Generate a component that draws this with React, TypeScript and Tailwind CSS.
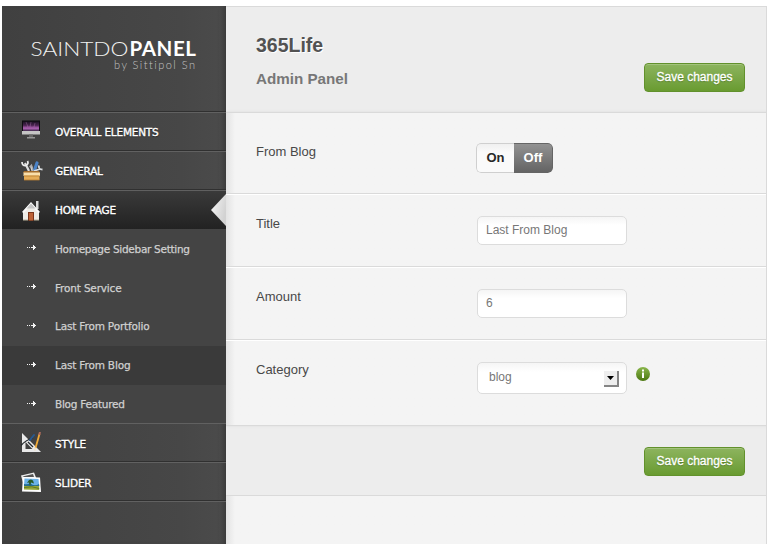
import type { ReactNode } from "react";

function MonitorIcon() {
  return (
    <svg className="-mt-[3px]" width="20" height="20" viewBox="0 0 20 20">
      <defs>
        <linearGradient id="screen" x1="0" y1="0" x2="0" y2="1">
          <stop offset="0" stopColor="#1a1222" />
          <stop offset="0.4" stopColor="#4a2350" />
          <stop offset="0.7" stopColor="#b264b8" />
          <stop offset="1" stopColor="#3c2748" />
        </linearGradient>
      </defs>
      <rect x="1" y="0.500" width="18" height="11.500" fill="#0d0c10" />
      <rect x="2" y="1.500" width="16" height="9.500" fill="url(#screen)" />
      <path d="M5 2l2 5M10 2l-1 5M14 3l-1 4" stroke="#e09be0" strokeWidth="0.7" opacity="0.4" />
      <rect x="1" y="11" width="18" height="3.500" fill="#c4c4c4" />
      <rect x="8" y="14.500" width="4" height="3" fill="#666" />
      <rect x="6" y="17" width="8" height="1.500" fill="#959595" />
    </svg>
  );
}

function ToolboxIcon() {
  return (
    <svg width="22" height="21" viewBox="0 0 22 21">
      <path d="M4 3l4 8M10 6l2 6" stroke="#dedede" strokeWidth="2.2" />
      <path d="M1 2q0 4 4 3.500Q8 4 6.500 1" fill="none" stroke="#eee" strokeWidth="1.700" />
      <path d="M16 3l-2.500 7" stroke="#4b83c8" strokeWidth="3.200" strokeLinecap="round" />
      <path d="M13 11l6-2M18 5.500q-1 4 3.500 4" fill="none" stroke="#d9dde0" strokeWidth="1.800" />
      <path d="M8.500 7l2-2 1.500 6" fill="none" stroke="#aaa" strokeWidth="1.300" />
      <path d="M3 11h15l1 2H2z" fill="#a26b2a" />
      <rect x="2.500" y="12.500" width="16.500" height="3.500" fill="#f9dfab" />
      <rect x="3" y="15.500" width="15.500" height="4.500" fill="#e5ad58" />
      <path d="M3 16h15.500M3 20h15.500" stroke="#b97e30" strokeWidth="0.8" />
    </svg>
  );
}

function HomeIcon() {
  return (
    <svg width="20" height="21" viewBox="0 0 20 21">
      <rect x="15" y="1" width="2.500" height="8" fill="#ddd" />
      <path d="M2 11.500L10 3l8 8.500V20H2z" fill="#eeece7" />
      <path d="M10 2L19 12 17.500 13 10 5.500 2.500 13 1 12z" fill="#fafafa" />
      <path d="M10 3.500L5.500 8.500h9z" fill="#c4c4c4" />
      <rect x="7" y="12" width="6" height="8.500" fill="#7b351b" />
      <rect x="8" y="13" width="4" height="7.500" fill="#bd6237" />
      <path d="M2 20h5M13 20h5" stroke="#b7b19a" />
    </svg>
  );
}

function StyleIcon() {
  return (
    <svg width="20" height="21" viewBox="0 0 20 21">
      <path fillRule="evenodd" d="M1 1v19h19zM4.500 10l7 7h-7z" fill="#e9e9e9" />
      <path d="M0 13.500q4-5 12-7.500M7 10l5 5" fill="none" stroke="#23292d" strokeWidth="1.300" />
      <path d="M9 8l4-5" stroke="#285a91" strokeWidth="2" strokeLinecap="round" />
      <path d="M18.500 2L14.500 16" stroke="#f2ab38" strokeWidth="1.800" />
      <path d="M19 0l-.8 3" stroke="#b36d5e" strokeWidth="2" />
      <path d="M14.500 15.500l-.8 3" stroke="#eee0c6" strokeWidth="1.400" />
    </svg>
  );
}

function SliderIcon() {
  return (
    <svg className="-ml-px mt-[2px]" width="22" height="21" viewBox="0 0 22 21">
      <path d="M1 3.500L14 .5l2 5 3 10L5 18z" fill="#eee" />
      <path d="M2.500 4.500L13 2l1 3H4z" fill="#555" />
      <path d="M3 5l17 .5L21 20 2 19.500z" fill="#fff" />
      <path d="M4.500 6.500L18.500 7l.7 7H4z" fill="#6bb2e8" />
      <path d="M4 13h15.200v5L4 17.500z" fill="#96a638" />
      <path d="M4 12q4 1 6-1 4 4 9.100 1v2H4z" fill="#246c91" />
      <path d="M7 11l2-3 2-.5 2 1 1 3-3-1-1 4-1-4z" fill="#285b28" />
      <path d="M4 15.500q8-2 15.200 1" fill="none" stroke="#5f7a24" />
    </svg>
  );
}

function NavItem({ icon, label, active = false, drop = "pt-[2px]" }: { icon: ReactNode; label: string; active?: boolean; drop?: string }) {
  return (
    <div
      className={
        active
          ? "relative flex h-[39px] items-center border-t border-[#606060] bg-linear-to-b from-[#3a3a3a] to-[#222222]"
          : "flex h-[39px] items-center border-t border-b border-t-[#616161] border-b-[#303030]"
      }
    >
      <span className="flex w-[53px] items-center pl-[19px]">{icon}</span>
      <span className={`text-[10.5px] font-normal tracking-[-0.2px] whitespace-nowrap text-white [-webkit-text-stroke:0.35px_white] [text-shadow:0_1px_1px_#222] ${drop}`}>
        {label}
      </span>
      {active && (
        <svg className="absolute top-[3px] right-0" width="15" height="32" viewBox="0 0 15 32">
          <defs>
            <linearGradient id="pointer" x1="0" y1="0" x2="1" y2="0.5">
              <stop offset="0" stopColor="#f8f8f8" />
              <stop offset="1" stopColor="#d2d2d2" />
            </linearGradient>
          </defs>
          <path d="M15 0v32L0 16z" fill="url(#pointer)" />
        </svg>
      )}
    </div>
  );
}

function SubItem({ label, active = false, tracking = "tracking-[-0.17px]", drop = "pt-0" }: { label: string; active?: boolean; tracking?: string; drop?: string }) {
  return (
    <div className={active ? "flex h-[39px] items-center bg-[#3a3a3a]" : "flex h-[39px] items-center"}>
      <span className="w-[53px] pl-[25px]">
        <svg className="-mt-[3px]" width="9" height="5" viewBox="0 0 9 5" shapeRendering="crispEdges" fill="#f3f3f3">
          <path d="M0 2h1v1H0zM2 2h1v1H2zM4 2h5v1H4zM6 0h1v5H6zM7 1h1v3H7z" />
        </svg>
      </span>
      <span className={`text-[10.5px] whitespace-nowrap text-[#d0d0d0] [-webkit-text-stroke:0.25px_#d0d0d0] ${tracking} ${drop}`}>{label}</span>
    </div>
  );
}

function SaveButton() {
  return (
    <button className="h-[29px] w-[101px] rounded-[4px] border border-[#62912c] bg-linear-to-b from-[#8db45e] to-[#699b30] pb-px text-[12px] text-white shadow-[inset_0_1px_0_#a3c37c] [-webkit-text-stroke:0.3px_white] [text-shadow:0_1px_1px_#557b2b]">
      Save changes
    </button>
  );
}

const field =
  "flex w-[150px] items-center rounded-[5px] border border-[#dcdcdc] bg-white bg-linear-to-b from-[#f5f5f5] to-white to-30% text-[12px] text-[#777]";

function Row({ label, className, children }: { label: string; className: string; children: ReactNode }) {
  return (
    <div className={`flex items-start pl-[30px] ${className}`}>
      <div className="w-[221px] text-[13px] leading-[15px] text-[#484848]">{label}</div>
      {children}
    </div>
  );
}

export default function App() {
  return (
    <div className="h-[544px] w-[767px] overflow-hidden bg-white pt-[6px] pl-[2px] font-['Liberation_Sans',sans-serif]">
      <div className="flex h-[538px]">
        <aside className="w-[224px] shrink-0 bg-linear-to-r from-[#404040] via-[#474747] via-80% to-[#4b4b4b] font-['DejaVu_Sans',sans-serif] shadow-[inset_-6px_0_6px_-5px_#333]">
          <div className="h-[106px] border-b border-[#303030]">
            <svg width="223" height="104" viewBox="0 0 223 104">
              <g fontFamily="Lato, sans-serif" className="[font-variant-ligatures:none]">
                <text x="28.500" y="49.500" fontSize="20.500" fontWeight="300" fill="#f2f2f2" textLength="98" lengthAdjust="spacingAndGlyphs">SAINTDO</text>
                <text x="127.500" y="49.500" fontSize="20.500" fontWeight="700" fill="#fff" textLength="66.500" lengthAdjust="spacing">PANEL</text>
                <text x="112" y="63.200" fontSize="11" fontWeight="300" fill="#c4c4c4" textLength="81" lengthAdjust="spacing">by Sittipol Sn</text>
              </g>
            </svg>
          </div>
          <NavItem icon={<MonitorIcon />} label="OVERALL ELEMENTS" />
          <NavItem icon={<ToolboxIcon />} label="GENERAL" />
          <NavItem icon={<HomeIcon />} label="HOME PAGE" active />
          <div className="h-[194px] overflow-hidden bg-[#444444]">
            <SubItem label="Homepage Sidebar Setting" tracking="tracking-[-0.29px]" drop="pt-[2px]" />
            <SubItem label="Front Service" drop="pt-[2px]" />
            <SubItem label="Last From Portfolio" />
            <SubItem label="Last From Blog" active />
            <SubItem label="Blog Featured" tracking="tracking-[-0.25px]" />
          </div>
          <NavItem icon={<StyleIcon />} label="STYLE" drop="pt-1" />
          <NavItem icon={<SliderIcon />} label="SLIDER" drop="pt-1" />
          <div className="h-px bg-[#616161]" />
        </aside>

        <main className="w-[541px] shrink-0 border-t border-r border-[#dadada] bg-[#f4f4f4] bg-linear-to-r from-[#e3e3e3] to-[#f4f4f4] to-[9px]">
          <header className="flex h-[106px] items-start justify-between border-b border-[#dadada] bg-[#ededed] pr-[21px] pl-[30px] shadow-[inset_0_-3px_3px_-3px_#ddd]">
            <div>
              <h1 className="mt-[26px] text-[19.5px] leading-6 font-bold whitespace-nowrap text-[#525252] [text-shadow:1px_1px_0_#fff]">365Life</h1>
              <h2 className="mt-[13px] text-[15.2px] leading-[18px] font-bold text-[#777]">Admin Panel</h2>
            </div>
            <div className="mt-[56px]"><SaveButton /></div>
          </header>

          <Row label="From Blog" className="h-[81px] border-b border-[#dadada] pt-[31px]">
            <div className="-mt-px -ml-px flex h-[30px] w-[77px] overflow-hidden rounded-[5px] text-[13px] font-bold">
              <div className="flex w-[38px] items-center justify-center rounded-l-[5px] border border-r-0 border-[#cfcfcf] bg-linear-to-b from-[#f0f0f0] to-[#fafafa] to-30% text-[#282828]">On</div>
              <div className="flex w-[39px] items-center justify-center rounded-r-[5px] border border-l-0 border-[#656565] bg-linear-to-b from-[#929292] to-[#646464] text-white">Off</div>
            </div>
          </Row>
          <Row label="Title" className="h-[73px] border-t border-b border-t-white border-b-[#dadada] pt-[21px]">
            <div className={`${field} h-[29px] pb-px pl-2`}>Last From Blog</div>
          </Row>
          <Row label="Amount" className="h-[73px] border-t border-b border-t-white border-b-[#dadada] pt-[21px]">
            <div className={`${field} h-[29px] pb-px pl-2`}>6</div>
          </Row>
          <Row label="Category" className="h-[85px] border-t border-white pt-[21px]">
            <div className={`${field} h-8 justify-between pr-[7px] pl-[11px]`}>
              <span className="-mt-[3px]">blog</span>
              <span className="mt-px flex h-4 w-[15px] items-center justify-center border-r-2 border-b-2 border-[#858585] bg-[#eee]">
                <svg width="7" height="4" viewBox="0 0 7 4"><path d="M0 0h7L3.500 4z" fill="#000" /></svg>
              </span>
            </div>
            <svg className="mt-[5px] ml-[9px]" width="14" height="14" viewBox="0 0 14 14">
              <defs>
                <linearGradient id="info" x1="0" y1="0" x2="0" y2="1">
                  <stop offset="0" stopColor="#8ab64c" />
                  <stop offset="1" stopColor="#4b7710" />
                </linearGradient>
              </defs>
              <circle cx="7" cy="7" r="7" fill="url(#info)" />
              <path d="M6 2.500h2v2H6zM6 5.500h2V11H6z" fill="#fff" />
            </svg>
          </Row>

          <footer className="flex h-[71px] items-start justify-end border-t border-b border-[#dadada] bg-[#ededed] pt-[21px] pr-[21px] shadow-[inset_0_3px_3px_-3px_#ddd]">
            <SaveButton />
          </footer>
        </main>
      </div>
    </div>
  );
}
